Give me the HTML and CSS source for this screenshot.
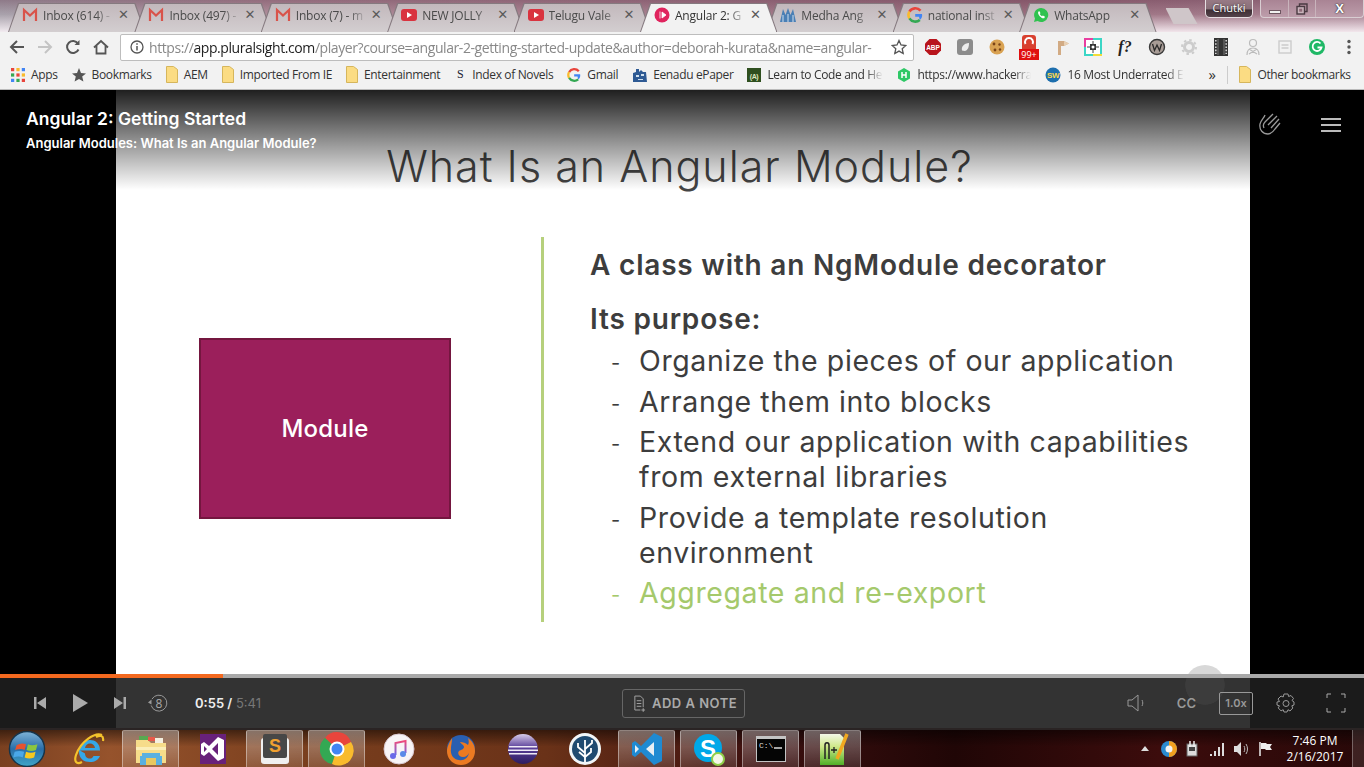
FILE: index.html
```html
<!DOCTYPE html>
<html>
<head>
    <meta charset="utf8"/>
    <title>Angular 2: Getting Started</title>
    <link rel="stylesheet" href="styles.css">
</head>
<body>
<svg class="defs" width="0" height="0">
    <defs>
        <linearGradient id="orbfill" x1="0" y1="0" x2="0" y2="1"><stop offset="0" stop-color="#7fb4d8"/><stop offset=".5" stop-color="#2a6ea8"/><stop offset="1" stop-color="#3fa6c8"/></linearGradient>
        <linearGradient id="notefill" x1="0" y1="0" x2="0" y2="1"><stop offset="0" stop-color="#f0487a"/><stop offset="1" stop-color="#6a6ae8"/></linearGradient>
        <linearGradient id="eclfill" x1="0" y1="0" x2="0" y2="1"><stop offset="0" stop-color="#d8cce8"/><stop offset=".45" stop-color="#5a3f9a"/><stop offset="1" stop-color="#2c1c60"/></linearGradient>
        <linearGradient id="nppfill" x1="0" y1="0" x2="0" y2="1"><stop offset="0" stop-color="#f4f8e8"/><stop offset=".4" stop-color="#cfe88a"/><stop offset="1" stop-color="#50b028"/></linearGradient>
    </defs>
    <symbol id="gmail" viewBox="0 0 16 16"><path d="M2 14V3l6 5.500L14 3v11" fill="none" stroke="#d9534a" stroke-width="2.200"/></symbol>
    <symbol id="yt" viewBox="0 0 16 16"><rect x="0" y="2" width="16" height="12" rx="3" fill="#d9333f"/><path d="M6 5l5 3-5 3z" fill="#fff"/></symbol>
    <symbol id="goog" viewBox="0 0 16 16"><path d="M13.500 3.600A7 7 0 0 0 2.400 4.600" fill="none" stroke="#e8453c" stroke-width="2.600"/><path d="M2.400 4.600a7 7 0 0 0 0 6.800" fill="none" stroke="#f9bb2d" stroke-width="2.600"/><path d="M2.400 11.400a7 7 0 0 0 10.400 1.600" fill="none" stroke="#34a853" stroke-width="2.600"/><path d="M12.800 13A6 6 0 0 0 15 7H8.200v2.800H12" fill="#4285f4"/></symbol>
    <symbol id="folder" viewBox="0 0 12 17"><path d="M.5.5h7l4 3v13H.5z" fill="#fbdc83" stroke="#d6b65c"/></symbol>
</svg>

<div class="tabstrip">
    <div class="tabs">
        <div class="tab"><svg class="fav"><use href="#gmail"/></svg><span class="tabname">Inbox (614) -</span><span class="x">✕</span></div>
        <div class="tab"><svg class="fav"><use href="#gmail"/></svg><span class="tabname">Inbox (497) -</span><span class="x">✕</span></div>
        <div class="tab"><svg class="fav"><use href="#gmail"/></svg><span class="tabname">Inbox (7) - m</span><span class="x">✕</span></div>
        <div class="tab"><svg class="fav"><use href="#yt"/></svg><span class="tabname">NEW JOLLY</span><span class="x">✕</span></div>
        <div class="tab"><svg class="fav"><use href="#yt"/></svg><span class="tabname">Telugu Vale</span><span class="x">✕</span></div>
        <div class="tab active">
            <svg class="fav" viewBox="0 0 16 16"><circle cx="8" cy="8" r="7.500" fill="#e0245e"/><path d="M6 4.500v7M8 5l4 3-4 3z" fill="#fff" stroke="#fff" stroke-width=".8"/></svg>
            <span class="tabname">Angular 2: G</span><span class="x">✕</span>
        </div>
        <div class="tab">
            <svg class="fav" viewBox="0 0 16 16"><path d="M0 15L3 2l2.500 6L8 1l2.500 7L13 2l3 13z" fill="#4a7fb5"/><path d="M3 15V8M8 15V7M13 15V8" stroke="#cfe0ee" stroke-width="1"/></svg>
            <span class="tabname">Medha Ang</span><span class="x">✕</span>
        </div>
        <div class="tab"><svg class="fav"><use href="#goog"/></svg><span class="tabname">national inst</span><span class="x">✕</span></div>
        <div class="tab">
            <svg class="fav" viewBox="0 0 16 16"><path d="M8 1a7 7 0 0 0-6 10.500L1 15l3.600-1A7 7 0 1 0 8 1z" fill="#2fc24f"/><path d="M5.500 4.500c-1.200 1.500.5 4 1.500 5s3 2.500 4.500 1.500l.3-1.500-2-1-.8.800c-1-.5-1.800-1.300-2.300-2.300l.8-.8-1-2z" fill="#fff"/></svg>
            <span class="tabname">WhatsApp</span><span class="x">✕</span>
        </div>
        <div class="newtab"></div>
    </div>
    <div class="winbtns">
        <div class="profile">Chutki</div>
        <div class="caption">
            <div class="cap cap-min"><i></i></div>
            <div class="cap cap-max">
                <svg class="maxic" viewBox="0 0 12 12"><path d="M3.500 3V1h7.500v7.500H9" fill="none" stroke="#4a3a42" stroke-width="1.400"/><rect x="1" y="3.500" width="7.500" height="7.500" fill="#c9b4bc" stroke="#4a3a42" stroke-width="1.400"/><rect x="3.200" y="5.700" width="3" height="3" fill="#8f6a78"/></svg>
            </div>
            <div class="cap cap-close">X</div>
        </div>
    </div>
</div>

<div class="toolbar">
    <div class="navs">
        <svg class="nav" viewBox="0 0 16 16"><path d="M15 8H2M8 2L2 8l6 6" fill="none" stroke="#555" stroke-width="2"/></svg>
        <svg class="nav" viewBox="0 0 16 16"><path d="M1 8h13M8 2l6 6-6 6" fill="none" stroke="#c4c4c4" stroke-width="2"/></svg>
        <svg class="nav" viewBox="0 0 16 16"><path d="M13.500 10.500A6 6 0 1 1 13 4.500" fill="none" stroke="#555" stroke-width="2"/><path d="M14.500 1v5h-5z" fill="#555"/></svg>
        <svg class="nav" viewBox="0 0 16 16"><path d="M1 8.500L8 2l7 6.500M3.500 7v7.500h9V7" fill="none" stroke="#555" stroke-width="1.800"/></svg>
    </div>
    <div class="omnibox">
        <svg class="info" viewBox="0 0 14 14"><circle cx="7" cy="7" r="6" fill="none" stroke="#555" stroke-width="1.300"/><path d="M7 6v4.500M7 3.300v1.500" stroke="#555" stroke-width="1.500"/></svg>
        <span class="url"><span class="dim">https://</span>app.pluralsight.com<span class="dim">/player?course=angular-2-getting-started-update&amp;author=deborah-kurata&amp;name=angular-</span></span>
        <svg class="omni-star" viewBox="0 0 16 16"><path d="M8 1.500l2 4.500 4.800.5-3.600 3.200 1 4.800L8 12.100l-4.200 2.400 1-4.800L1.200 6.500 6 6z" fill="none" stroke="#555" stroke-width="1.300"/></svg>
    </div>
    <div class="exts">
        <svg class="ext" viewBox="0 0 18 18"><path d="M5.500 1h7L17 5.500v7L12.500 17h-7L1 12.500v-7z" fill="#b8141c"/><text x="9" y="11.500" class="abp">ABP</text></svg>
        <svg class="ext" viewBox="0 0 18 18"><rect x="1" y="1" width="16" height="16" rx="3" fill="#8c8c8c"/><path d="M6 12.500c-1-4 2-7 7-7.500 0 4-1 7-4 8z" fill="#eee"/></svg>
        <svg class="ext" viewBox="0 0 18 18"><circle cx="9" cy="9" r="7.500" fill="#d9a252"/><circle cx="6" cy="6" r="1.400" fill="#7a4418"/><circle cx="11.500" cy="6.500" r="1.200" fill="#7a4418"/><circle cx="7" cy="12" r="1.400" fill="#7a4418"/><circle cx="12" cy="11.500" r="1.200" fill="#7a4418"/></svg>
        <div class="ext ext-badge">
            <svg class="ext-c" viewBox="0 0 18 14"><path d="M2 14V3a3 3 0 0 1 3-3h8a3 3 0 0 1 3 3v11z" fill="#d8402f"/><path d="M12.500 9a4 4 0 1 0-7 0" fill="none" stroke="#fff" stroke-width="2"/></svg>
            <span class="badge">99+</span>
        </div>
        <svg class="ext" viewBox="0 0 18 18"><path d="M6 3h6l5 2.500L12 8H9v9H6z" fill="#d2ab84"/><path d="M12 3l5 2.500L12 8z" fill="#e8d0b4"/></svg>
        <svg class="ext" viewBox="0 0 18 18"><rect x="1" y="1" width="16" height="16" fill="#fff" stroke="#3bd6c6" stroke-width="2"/><path d="M0 0h9v2H2v7H0z" fill="#e83ea0"/><path d="M9 16h9v2H9z" fill="#f2dc3a"/><path d="M6 6h6v6H6z" fill="#333"/><path d="M9 3v12M3 9h12" stroke="#444"/><circle cx="9" cy="9" r="1.500" fill="#fff"/></svg>
        <span class="ext ext-f">f?</span>
        <svg class="ext" viewBox="0 0 18 18"><circle cx="9" cy="9" r="7.500" fill="#a89c96" stroke="#3a3a3a" stroke-width="1.400"/><path d="M4.500 6l2 6.500L9 7l2.500 5.500L13.500 6" fill="none" stroke="#2a2a2a" stroke-width="1.300"/></svg>
        <svg class="ext" viewBox="0 0 18 18"><circle cx="9" cy="9" r="4.500" fill="none" stroke="#ccc" stroke-width="3"/><circle cx="9" cy="9" r="7" fill="none" stroke="#ccc" stroke-width="2" stroke-dasharray="2.500 3"/></svg>
        <svg class="ext" viewBox="0 0 18 18"><rect x="2" y="0" width="14" height="18" fill="#333"/><path d="M6 1v16M12 1v16" stroke="#777"/><path d="M3.800 2v14M14.200 2v14" stroke="#ddd" stroke-width="1.500" stroke-dasharray="1.600 1.600"/></svg>
        <svg class="ext" viewBox="0 0 18 18"><circle cx="9" cy="5" r="3.500" fill="none" stroke="#bbb" stroke-width="1.200"/><path d="M3 17c0-5 2-7 6-7s6 2 6 7M5 11l8 5M13 11l-8 5" fill="none" stroke="#bbb" stroke-width="1.200"/></svg>
        <svg class="ext" viewBox="0 0 18 18"><rect x="3" y="3" width="12" height="12" fill="none" stroke="#ccc" stroke-width="1.400"/><path d="M5.500 7h7M5.500 10h7" stroke="#ccc" stroke-width="1.400"/></svg>
        <svg class="ext" viewBox="0 0 18 18"><circle cx="9" cy="9" r="8" fill="#1fb866"/><path d="M12.500 5.500a4.500 4.500 0 1 0 1 4H9.500" fill="none" stroke="#fff" stroke-width="1.800"/></svg>
        <svg class="ext ext-menu" viewBox="0 0 6 18"><circle cx="3" cy="3.500" r="1.700" fill="#555"/><circle cx="3" cy="9" r="1.700" fill="#555"/><circle cx="3" cy="14.500" r="1.700" fill="#555"/></svg>
    </div>
</div>

<div class="bookmarks">
    <div class="bm">
        <svg class="bmicon" viewBox="0 0 13 13"><path d="M0 0h3v3H0z" fill="#e8453c"/><path d="M5 0h3v3H5z" fill="#f9bb2d"/><path d="M10 0h3v3h-3z" fill="#4285f4"/><path d="M0 5h3v3H0z" fill="#34a853"/><path d="M5 5h3v3H5z" fill="#e8453c"/><path d="M10 5h3v3h-3z" fill="#f9bb2d"/><path d="M0 10h3v3H0z" fill="#4285f4"/><path d="M5 10h3v3H5z" fill="#34a853"/><path d="M10 10h3v3h-3z" fill="#e8453c"/></svg>
        Apps
    </div>
    <div class="bm">
        <svg class="bmicon" viewBox="0 0 14 14"><path d="M7 0l2 5 5 .4-3.800 3.200 1.200 5L7 11l-4.400 2.600 1.200-5L0 5.400 5 5z" fill="#555"/></svg>
        Bookmarks
    </div>
    <div class="bm"><svg class="bmfold"><use href="#folder"/></svg>AEM</div>
    <div class="bm"><svg class="bmfold"><use href="#folder"/></svg>Imported From IE</div>
    <div class="bm"><svg class="bmfold"><use href="#folder"/></svg>Entertainment</div>
    <div class="bm"><span class="bm-s">S</span>Index of Novels</div>
    <div class="bm"><svg class="bmicon"><use href="#goog"/></svg>Gmail</div>
    <div class="bm bm-tight">
        <svg class="bmicon bmicon-wide" viewBox="0 0 16 16"><path d="M1 15V6l3-1V2h3v3l2-2 2 2h3l1 10z" fill="#2e5a94"/><path d="M4 8h3v2H4zM9 7h3v2H9zM6 12h5v1H6z" fill="#cfe0ee"/></svg>
        Eenadu ePaper
    </div>
    <div class="bm">
        <svg class="bmicon" viewBox="0 0 14 14"><rect width="14" height="14" fill="#2f4f1f"/><text x="7" y="10.500" class="fcc">(A)</text></svg>
        <span class="fade fade-learn">Learn to Code and He</span>
    </div>
    <div class="bm">
        <svg class="bmicon" viewBox="0 0 14 14"><path d="M7 0l6 3.500v7L7 14l-6-3.500v-7z" fill="#2ec866"/><path d="M5 4v6M9 4v6M5 7h4" stroke="#fff" stroke-width="1.500"/></svg>
        <span class="fade fade-hack">https://www.hackerra</span>
    </div>
    <div class="bm">
        <svg class="bmicon bmicon-wide" viewBox="0 0 16 16"><circle cx="8" cy="8" r="7.500" fill="#1e6fae"/><text x="8" y="11" class="sw">SW</text></svg>
        <span class="fade fade-under">16 Most Underrated E</span>
    </div>
    <div class="bm-more">»</div>
    <div class="bm-sep"></div>
    <div class="bm"><svg class="bmfold"><use href="#folder"/></svg>Other bookmarks</div>
</div>

<div class="player">
    <div class="stage">
        <div class="slide">
            <h1 class="slide-title">What Is an Angular Module?</h1>
            <div class="slide-body">
                <div class="diagram"><div class="modbox">Module</div></div>
                <div class="points">
                    <p class="lead">A class with an NgModule decorator</p>
                    <p class="lead lead-2">Its purpose:</p>
                    <ul class="list">
                        <li>Organize the pieces of our application</li>
                        <li>Arrange them into blocks</li>
                        <li>Extend our application with capabilities from external libraries</li>
                        <li>Provide a template resolution environment</li>
                        <li class="now">Aggregate and re-export</li>
                    </ul>
                </div>
            </div>
        </div>
    </div>
    <div class="shade"></div>
    <div class="heading">
        <div class="course">Angular 2: Getting Started</div>
        <div class="clip">Angular Modules: What Is an Angular Module?</div>
    </div>
    <div class="topicons">
        <svg class="wave" viewBox="0 0 24 24"><path d="M7 2C6 5 3 7 2 11c-1 6 3 10 8 10 3 0 5-2 7-5l5-6M10 12l9-9M7 9l8-8M13 15l8-9M7 9c-2 2-2 4-1 6" fill="none" stroke="#999" stroke-width="1.300"/></svg>
        <div class="burger"><i></i><i></i><i></i></div>
    </div>
    <div class="ghost"></div>
    <div class="progress"><div class="progress-done"></div></div>
    <div class="controls">
        <div class="ctl-left">
            <svg class="ctl ctl-prev" viewBox="0 0 14 14"><path d="M1 1h2.500v12H1zM13 1v12L4 7z" fill="#aaa"/></svg>
            <svg class="ctl ctl-play" viewBox="0 0 16 18"><path d="M1 0l15 9-15 9z" fill="#aaa"/></svg>
            <svg class="ctl ctl-next" viewBox="0 0 14 14"><path d="M1 1v12l9-6zM10.500 1H13v12h-2.500z" fill="#aaa"/></svg>
            <svg class="ctl ctl-back" viewBox="0 0 20 20"><path d="M4 6a8 8 0 1 1-.8 6.500" fill="none" stroke="#999" stroke-width="1"/><path d="M0 9.500l3.500-3v5z" fill="#999"/><text x="11" y="14.500" class="eight">8</text></svg>
            <div class="time"><b>0:55 /</b> <span>5:41</span></div>
        </div>
        <div class="note">
            <svg class="note-ic" viewBox="0 0 14 18"><path d="M2 1h6l3 3v9M2 1v15h6M4 6h5M4 9h5M4 12h5M11 14v4M9 16h4" fill="none" stroke="#aaa" stroke-width="1"/></svg>
            ADD A NOTE
        </div>
        <div class="ctl-right">
            <svg class="ctl ctl-vol" viewBox="0 0 18 18"><path d="M1 6h4l6-5v16l-6-5H1zM15 6c1 2 1 4 0 6" fill="none" stroke="#999" stroke-width="1"/></svg>
            <span class="cc">CC</span>
            <span class="speed">1.0x</span>
            <svg class="ctl ctl-gear" viewBox="0 0 20 20"><path d="M8 1h4l.6 2.500 2.400-1 2.500 3-1.500 2L18 9v3l-2.200.8 1 2.200-2.800 3-2-1.300L11 19H8l-.8-2.300-2.200 1.200-2.800-3 1.300-2.100L1 12V9l2.500-.5L2 6l3-3 2.200 1z" fill="none" stroke="#999" stroke-width="1"/><circle cx="10" cy="10.500" r="3" fill="none" stroke="#999"/></svg>
            <svg class="ctl ctl-full" viewBox="0 0 20 20"><path d="M1 5V1h4M15 1h4v4M19 15v4h-4M5 19H1v-4" fill="none" stroke="#aaa" stroke-width="1"/></svg>
        </div>
    </div>
</div>

<div class="taskbar">
    <div class="start">
        <svg viewBox="0 0 40 40" class="orb">
            <circle cx="20" cy="20" r="18.500" fill="url(#orbfill)" stroke="#16344a" stroke-width="1.500"/>
            <path d="M9 16q5-3 10-1l-1.500 6q-4-2-10 0z" fill="#e8532e"/><path d="M21 15q4 2 10 0l-1.500 6q-5 2-10 0z" fill="#8cc63f"/>
            <path d="M7 23q5-2 10 0l-1.500 6q-4-2-10 0z" fill="#4aa8e8"/><path d="M19 23q5 2 10 0l-1.500 6q-5 2-10 0z" fill="#f8c81e"/>
        </svg>
    </div>
    <div class="apps">
        <div class="slot">
            <svg class="tbicon" viewBox="0 0 34 34"><path d="M8 18.500h20C28 11 23 8 18 8S7 12 7 19.500 12 30 18 30c5 0 8-2 10-6h-6.500c-1 2-2 2.500-3.500 2.500-3 0-5-2-5-5M13 16c.5-3 2.500-4.500 5-4.500s4.500 1.500 5 4.500z" fill="#35a8e8" fill-rule="evenodd"/><path d="M30 3C23 0 9 9 4 23c-2 6 0 10 6 7M24 5c4-2 8-2 7 4" fill="none" stroke="#f4c22b" stroke-width="2.200"/></svg>
        </div>
        <div class="slot on">
            <svg class="tbicon" viewBox="0 0 34 34"><path d="M2 8h12l3 3h15v20H2z" fill="#f6dc8a"/><path d="M5 4h9v4H5z" fill="#58a850"/><path d="M14 5h7v4h-7z" fill="#e85a4a"/><path d="M21 6h8v5h-8z" fill="#f4f0e0"/><path d="M2 15h30v3H2z" fill="#fbeeb8"/><path d="M8 21h18v3h2v9h-6v-7H12v7H6v-9h2z" fill="#5ab0e0"/><path d="M12 26h10v7H12z" fill="#e8c860"/></svg>
        </div>
        <div class="slot">
            <svg class="tbicon" viewBox="0 0 34 34"><path d="M4 2h26v30H4z" fill="#68217a"/><path d="M22 5l6 3v18l-6 3-9-9-5 4-3-2V12l3-2 5 4zM22 11l-6 6 6 6zM8 14v6l3-3z" fill="#fff" fill-rule="evenodd"/></svg>
        </div>
        <div class="slot on">
            <svg class="tbicon" viewBox="0 0 34 34"><rect x="3" y="6" width="28" height="26" rx="3" fill="#f0f0f0"/><rect x="5" y="2" width="24" height="24" rx="2" fill="#474747"/><text x="17" y="20" class="subl">S</text></svg>
        </div>
        <div class="slot on">
            <svg class="tbicon" viewBox="0 0 34 34"><path d="M17 17L5 6a15 15 0 0 1 26 4z" fill="#e8453c"/><path d="M17 17L5 6a15 15 0 0 0 7 26z" fill="#34a853"/><path d="M17 17l14-7a15 15 0 0 1-19 22z" fill="#f9bb2d"/><circle cx="17" cy="17" r="7.500" fill="#fff"/><circle cx="17" cy="17" r="5.500" fill="#4285f4"/></svg>
        </div>
        <div class="slot">
            <svg class="tbicon" viewBox="0 0 34 34"><circle cx="17" cy="17" r="15" fill="#f8f4f6" stroke="#d8c8d0"/><path d="M13.500 23V11l10-2v12" fill="none" stroke="url(#notefill)" stroke-width="2"/><circle cx="11" cy="24" r="3" fill="#6a6ae8"/><circle cx="21" cy="22" r="3" fill="#5a8ae8"/></svg>
        </div>
        <div class="slot">
            <svg class="tbicon" viewBox="0 0 34 34"><circle cx="17" cy="17" r="14" fill="#2a5fb0"/><path d="M8 6c-2 4-5 8-5 13 0 8 6 14 14 14s14-6 14-14c0-6-3-10-7-13 1 3 1 5 0 7-2-2-5-3-8-3 1 2 4 3 4 5s-3 3-5 4c-2 2 0 6 4 6 3 0 5-2 6-4-1 5-5 8-10 7-5 0-9-5-8-11 0-4 1-6 1-11z" fill="#ec7a22"/></svg>
        </div>
        <div class="slot">
            <svg class="tbicon" viewBox="0 0 34 34"><circle cx="17" cy="17" r="15" fill="url(#eclfill)"/><path d="M3 14h28v1.500H3zM2 17.500h30V19H2zM3 21h28v1.500H3z" fill="#efeaf6"/></svg>
        </div>
        <div class="slot">
            <svg class="tbicon" viewBox="0 0 34 34"><circle cx="17" cy="17" r="16" fill="#f2f6f8"/><circle cx="17" cy="17" r="13" fill="#1f4a70"/><path d="M17 30V8M17 21l-7-6V11M17 17l7-6V8M17 25l6-5v-4M17 25l-6-5" fill="none" stroke="#fff" stroke-width="1.800"/></svg>
        </div>
        <div class="slot on">
            <svg class="tbicon" viewBox="0 0 34 34"><path d="M24 1l8 4v24l-8 4-13-13-6 5-3-2V11l3-2 6 5z" fill="#1f8ad2"/><path d="M24 10l-8 7 8 7zM5 13v8l4-4z" fill="#e8eef4"/></svg>
        </div>
        <div class="slot on">
            <svg class="tbicon" viewBox="0 0 34 34"><circle cx="16" cy="16" r="14" fill="#00a8e8"/><text x="16" y="25" class="skype">S</text><circle cx="26" cy="27" r="6" fill="#f4f8e8" stroke="#8fd048" stroke-width="2"/></svg>
        </div>
        <div class="slot on">
            <svg class="tbicon tbicon-cmd" viewBox="0 0 30 30"><rect width="30" height="26" y="2" fill="#c4c4c4"/><rect x="1" y="5" width="28" height="22" fill="#050505"/><text x="3" y="14" class="cmd">C:\</text><path d="M18 14h8" stroke="#ddd" stroke-width="1.500"/></svg>
        </div>
        <div class="slot on">
            <svg class="tbicon" viewBox="0 0 34 34"><path d="M4 2h20l4 4v27H4z" fill="url(#nppfill)"/><path d="M9 27V13c0-3 4-3 4 0v14" fill="none" stroke="#222" stroke-width="1.500"/><path d="M15 18h6M18 15v6" stroke="#222" stroke-width="1.300"/><path d="M31 2L21 27" stroke="#f0a820" stroke-width="3.500"/></svg>
        </div>
    </div>
    <div class="tray">
        <span class="tray-up"></span>
        <svg class="tr" viewBox="0 0 16 16"><circle cx="8" cy="8" r="8" fill="#2a8ad0"/><path d="M8 0a8 8 0 0 1 0 16z" fill="#f2a020"/><circle cx="8" cy="8" r="3.500" fill="#f4f4f4"/></svg>
        <svg class="tr" viewBox="0 0 16 16"><rect x="2" y="3" width="10" height="12" fill="#ddd" stroke="#666"/><path d="M5 0v6M9 0v6" stroke="#eee" stroke-width="1.500"/><path d="M4 6h6v4H4z" fill="#444"/></svg>
        <svg class="tr" viewBox="0 0 16 16"><path d="M1 13h2v2H1zM5 10h2v5H5zM9 6h2v9H9zM13 2h2v13h-2z" fill="#ddd"/></svg>
        <svg class="tr" viewBox="0 0 16 16"><path d="M1 5h3l4-4v14l-4-4H1z" fill="#ddd"/><path d="M11 5c1 2 1 4 0 6M13 3c2 3 2 7 0 10" fill="none" stroke="#bbb"/></svg>
        <svg class="tr tr-flag" viewBox="0 0 16 16"><path d="M3 1v14" stroke="#eee" stroke-width="1.500"/><path d="M4 2h5l1 1h5l-2 3 2 3h-6l-1-1H4z" fill="#eee"/></svg>
        <div class="clock"><div>7:46 PM</div><div>2/16/2017</div></div>
        <div class="showdesk"></div>
    </div>
</div>
</body>
</html>
```

FILE: styles.css
```css
* {
    box-sizing: border-box;
}

html, body {
    margin: 0;
    padding: 0;
    height: 767px;
    overflow: hidden;
    background: #000;
    font-family: "Open Sans", "Liberation Sans", sans-serif;
}

.defs {
    position: absolute;
}

/* tab strip */
.tabstrip {
    height: 32px;
    display: flex;
    justify-content: space-between;
    background:
        linear-gradient(rgba(80, 30, 55, .3), rgba(80, 30, 55, 0) 45%, rgba(255, 248, 252, .85)),
        linear-gradient(90deg, #a9a2ac 0%, #b08e9b 20%, #a67f8e 50%, #9c7080 75%, #a98494 100%);
}

.tabs {
    display: flex;
    align-items: flex-end;
    padding-left: 8px;
}

.tab {
    position: relative;
    width: 137.4px;
    height: 29px;
    margin-right: -11px;
    padding: 0 16px 5px 14px;
    display: flex;
    align-items: center;
    font-size: 12px;
    letter-spacing: -.2px;
    color: #4a4a4a;
    isolation: isolate;
}

.tab::before, .tab::after {
    content: "";
    position: absolute;
    z-index: -1;
    clip-path: polygon(0 100%, 10px 0, calc(100% - 10px) 0, 100% 100%);
}

.tab::before {
    inset: 0;
    background: #85797f;
}

.tab::after {
    inset: 1px 1px 0 1px;
    background: linear-gradient(#c2b8bc, #d3ced0);
}

.tab.active {
    z-index: 2;
    color: #333;
}

.tab.active::after {
    background: #f2f2f2;
}

.fav {
    width: 16px;
    height: 16px;
    flex: none;
}

.tabname {
    flex: 1;
    min-width: 0;
    margin-left: 5px;
    white-space: nowrap;
    -webkit-mask-image: linear-gradient(90deg, #000 72%, transparent 96%);
    mask-image: linear-gradient(90deg, #000 72%, transparent 96%);
}

.x {
    width: 12px;
    flex: none;
    font-family: "DejaVu Sans", sans-serif;
    font-size: 13px;
    font-weight: bold;
    line-height: 12px;
    text-align: center;
    color: #5a5a5a;
}

.newtab {
    width: 32px;
    height: 16px;
    margin: 0 0 8px 20px;
    background: #cfc6c9;
    clip-path: polygon(0 0, 72% 0, 100% 100%, 25% 100%);
}

.winbtns {
    display: flex;
    align-items: flex-start;
    gap: 7px;
}

.profile {
    width: 48px;
    height: 18px;
    border: 1px solid #e6dfe2;
    border-top: 0;
    border-radius: 0 0 5px 5px;
    background: linear-gradient(#977a85, #8a707a 50%, #3f3036 60%, #54424a);
    color: #fff;
    font-size: 11px;
    line-height: 16px;
    text-align: center;
    text-shadow: 0 0 2px #222;
}

.caption {
    display: flex;
    width: 104px;
    height: 18px;
    border: 1px solid #d9cdd2;
    border-top: 0;
    border-radius: 0 0 4px 4px;
    background: linear-gradient(#a98494, #bd9dab);
}

.cap {
    display: flex;
    align-items: center;
    justify-content: center;
    border-right: 1px solid #c9b4bc;
    color: #fff;
}

.cap-min {
    width: 28px;
}

.cap-min i {
    width: 12px;
    height: 4px;
    margin-top: 6px;
    background: #f0f0f0;
    border: 1px solid #6c5660;
}

.cap-max {
    width: 27px;
}

.maxic {
    width: 12px;
    height: 12px;
}

.cap-close {
    flex: 1;
    border-right: 0;
    font: bold 13px "Liberation Sans", sans-serif;
    text-shadow: 0 0 2px #333, 0 0 1px #333;
}

/* toolbar */
.toolbar {
    height: 30px;
    display: flex;
    align-items: center;
    background: #f2f2f2;
}

.navs {
    width: 120px;
    display: flex;
    gap: 12px;
    padding-left: 9px;
}

.nav {
    width: 16px;
    height: 16px;
}

.omnibox {
    width: 794px;
    height: 27px;
    display: flex;
    align-items: center;
    padding: 0 6px 0 9px;
    background: #fff;
    border: 1px solid #bdbdbd;
    border-radius: 2px;
}

.info {
    width: 14px;
    height: 14px;
    flex: none;
}

.url {
    flex: 1;
    min-width: 0;
    margin-left: 5px;
    font-size: 14px;
    letter-spacing: -.42px;
    white-space: nowrap;
    color: #222;
    -webkit-mask-image: linear-gradient(90deg, #000 98%, transparent);
    mask-image: linear-gradient(90deg, #000 98%, transparent);
}

.dim {
    color: #888;
}

.omni-star {
    width: 16px;
    height: 16px;
    flex: none;
    margin-left: 6px;
}

.exts {
    flex: 1;
    display: flex;
    align-items: center;
    padding-left: 10px;
    gap: 14px;
}

.ext {
    width: 18px;
    height: 18px;
    flex: none;
}

.ext-badge {
    position: relative;
}

.ext-c {
    width: 18px;
    height: 14px;
    display: block;
    margin-top: -3px;
}

.badge {
    position: absolute;
    left: -1px;
    top: 11px;
    width: 20px;
    height: 11px;
    background: #e01010;
    color: #fff;
    font-size: 9px;
    line-height: 11px;
    text-align: center;
}

.ext-f {
    font: italic bold 16px/18px "Liberation Serif", serif;
    color: #222;
    text-align: center;
}

.ext-menu {
    width: 6px;
    margin-left: 6px;
}

.abp {
    font: bold 6.5px "Liberation Sans", sans-serif;
    fill: #fff;
    text-anchor: middle;
}

/* bookmarks */
.bookmarks {
    height: 28px;
    display: flex;
    align-items: center;
    padding: 0 0 2px 11px;
    gap: 14px;
    background: #f2f2f2;
    border-bottom: 1px solid #bbb;
    font-size: 12px;
    letter-spacing: -.35px;
    color: #333;
    white-space: nowrap;
}

.bm {
    display: flex;
    align-items: center;
    gap: 6px;
}

.bm-tight {
    gap: 5px;
}

.bmicon {
    width: 14px;
    height: 14px;
    flex: none;
}

.bmicon-wide {
    width: 16px;
    height: 16px;
}

.bmfold {
    width: 12px;
    height: 17px;
    flex: none;
}

.bm-s {
    width: 12px;
    text-align: center;
    font-family: "Liberation Serif", serif;
    color: #223;
}

.fade {
    -webkit-mask-image: linear-gradient(90deg, #000 85%, transparent);
    mask-image: linear-gradient(90deg, #000 85%, transparent);
}

.fade-learn {
    width: 116px;
}

.fade-hack {
    width: 114px;
}

.fade-under {
    width: 117px;
}

.bm-more {
    margin: 0 -5px 0 10px;
    width: 10px;
    font-size: 15px;
    line-height: 15px;
}

.bm-sep {
    width: 1px;
    height: 18px;
    margin-right: -3px;
    background: #ccc;
}

.fcc {
    font: bold 7px "Liberation Sans", sans-serif;
    fill: #dfe8c0;
    text-anchor: middle;
}

.sw {
    font: bold 8px "Liberation Sans", sans-serif;
    fill: #ffd94a;
    text-anchor: middle;
}

/* player */
.player {
    position: relative;
    height: 638px;
    background: #000;
}

.stage {
    height: 584px;
    padding-left: 116px;
    background: #000;
}

.slide {
    width: 1134px;
    height: 584px;
    background: #fff;
    font-family: Inter, "Open Sans", sans-serif;
    color: #3d3d3d;
}

.slide-title {
    margin: 0;
    padding: 46px 7px 0 0;
    height: 147px;
    font-size: 43px;
    line-height: 60px;
    font-weight: 300;
    letter-spacing: 1px;
    text-align: center;
    color: #444;
}

.slide-body {
    display: flex;
}

.diagram {
    width: 425px;
    padding: 101px 0 0 83px;
}

.modbox {
    width: 252px;
    height: 181px;
    display: flex;
    align-items: center;
    justify-content: center;
    background: #9b1f5b;
    border: 2px solid #74163f;
    color: #fff;
    font-size: 24px;
    font-weight: 500;
    letter-spacing: .2px;
}

.points {
    width: 670px;
    height: 385px;
    padding: 11px 0 0 46px;
    border-left: 3px solid #b6d07c;
    font-size: 28.5px;
    letter-spacing: .6px;
    line-height: 35px;
}

.lead {
    margin: 0 0 19px;
    font-size: 28px;
    letter-spacing: .8px;
    font-weight: 600;
}

.lead-2 {
    margin-bottom: 6px;
}

.list {
    margin: 0;
    padding: 0 0 0 49px;
    list-style: none;
}

.list li {
    position: relative;
    margin-bottom: 5.5px;
}

.list li::before {
    content: "-";
    position: absolute;
    left: -28px;
    top: 3px;
    font-size: 20px;
}

.list .now {
    color: #a5c96c;
}

.shade {
    position: absolute;
    left: 0;
    right: 0;
    top: 0;
    height: 100px;
    background: linear-gradient(rgba(0, 0, 0, .88), rgba(0, 0, 0, 0));
}

.heading {
    position: absolute;
    left: 26px;
    top: 18px;
    color: #fff;
    font-family: Inter, "Open Sans", sans-serif;
    font-weight: 600;
}

.course {
    font-size: 17.5px;
    line-height: 22px;
}

.clip {
    margin-top: 4px;
    font-size: 13px;
    line-height: 18px;
}

.topicons {
    position: absolute;
    right: 23px;
    top: 23px;
    display: flex;
    align-items: center;
    gap: 39px;
}

.wave {
    width: 24px;
    height: 24px;
}

.burger {
    width: 20px;
    display: flex;
    flex-direction: column;
    gap: 4px;
}

.burger i {
    height: 2px;
    background: #bbb;
}

.ghost {
    position: absolute;
    left: 1185px;
    top: 575px;
    width: 40px;
    height: 40px;
    border-radius: 50%;
    background: #d8d8d8;
}

.progress {
    position: relative;
    height: 4px;
    background: #a9a9a9;
}

.progress-done {
    width: 223px;
    height: 4px;
    background: #f4691f;
}

.controls {
    position: relative;
    height: 50px;
    display: grid;
    grid-template-columns: 1fr auto 1fr;
    align-items: center;
    background:
        radial-gradient(circle 20px at 1205px 7px, #3c3c3c 97%, transparent),
        linear-gradient(90deg, #1b1b1b 116px, #333 116px, #333 1250px, #1b1b1b 1250px);
    color: #aaa;
}

.ctl-left {
    display: flex;
    align-items: center;
    padding-left: 33px;
}

.ctl-prev, .ctl-next {
    width: 14px;
    height: 14px;
}

.ctl-play {
    width: 16px;
    height: 18px;
    margin-left: 25px;
}

.ctl-next {
    margin-left: 25px;
}

.ctl-back {
    width: 20px;
    height: 20px;
    margin-left: 21px;
}

.eight {
    font-size: 12px;
    fill: #aaa;
    text-anchor: middle;
    font-family: "Open Sans", sans-serif;
}

.time {
    margin-left: 27px;
    font-family: Inter, "Open Sans", sans-serif;
    font-size: 13px;
}

.time b {
    color: #eee;
    font-weight: 600;
}

.time span {
    color: #777;
}

.note {
    width: 123px;
    height: 29px;
    margin-left: 3px;
    display: flex;
    align-items: center;
    gap: 6px;
    padding-left: 10px;
    border: 1px solid #666;
    border-radius: 3px;
    font: 600 13px Inter, "Open Sans", sans-serif;
    letter-spacing: .5px;
    color: #aaa;
}

.note-ic {
    width: 13px;
    height: 17px;
}

.ctl-right {
    display: flex;
    align-items: center;
    justify-content: flex-end;
    padding-right: 18px;
}

.ctl-vol {
    width: 18px;
    height: 18px;
}

.cc {
    margin-left: 32px;
    font: 600 13px Inter, "Open Sans", sans-serif;
    color: #999;
}

.speed {
    width: 34px;
    height: 23px;
    margin-left: 23px;
    border: 1px solid #999;
    border-radius: 2px;
    font: 600 11px/21px Inter, "Open Sans", sans-serif;
    text-align: center;
    color: #999;
}

.ctl-gear {
    width: 20px;
    height: 20px;
    margin-left: 23px;
}

.ctl-full {
    width: 20px;
    height: 20px;
    margin-left: 30px;
}

/* windows taskbar */
.taskbar {
    height: 39px;
    display: flex;
    border-top: 2px solid #2a2424;
    background:
        linear-gradient(rgba(0, 0, 0, .5), rgba(0, 0, 0, 0) 45%),
        linear-gradient(90deg, #7a4020 0%, #96532c 8%, #7a3f1e 22%, #6a3218 40%, #3c0f0f 56%, #200606 70%, #3c0c0c 85%, #280808 100%);
}

.start {
    width: 60px;
    padding: 0 0 0 8px;
}

.orb {
    width: 38px;
    height: 38px;
}

.apps {
    display: flex;
    gap: 5px;
}

.slot {
    width: 57px;
    display: flex;
    align-items: center;
    justify-content: center;
}

.slot.on {
    background: linear-gradient(rgba(255, 255, 255, .36), rgba(255, 255, 255, .12));
    border: 1px solid rgba(255, 255, 255, .4);
    border-bottom: 0;
    border-radius: 2px 2px 0 0;
}

.tbicon {
    width: 34px;
    height: 34px;
}

.tbicon-cmd {
    width: 30px;
    height: 30px;
}

.subl {
    font: bold 18px "Liberation Sans", sans-serif;
    fill: #f0a030;
    text-anchor: middle;
}

.skype {
    font: bold 24px "Liberation Sans", sans-serif;
    fill: #fff;
    text-anchor: middle;
}

.cmd {
    font: 8px "Liberation Mono", monospace;
    fill: #ddd;
}

.tray {
    flex: 1;
    display: flex;
    align-items: center;
    justify-content: flex-end;
    color: #fff;
}

.tray-up {
    width: 0;
    height: 0;
    margin-right: 12px;
    border: 4px solid transparent;
    border-top: 0;
    border-bottom: 5px solid #ddd;
}

.tr {
    width: 16px;
    height: 16px;
    margin-right: 8px;
}

.tr-flag {
    margin-right: 5px;
}

.clock {
    width: 74px;
    font-size: 12px;
    line-height: 16px;
    text-align: center;
}

.showdesk {
    width: 12px;
    height: 100%;
    background: rgba(255, 255, 255, .1);
    border-left: 1px solid rgba(255, 255, 255, .3);
}
```
